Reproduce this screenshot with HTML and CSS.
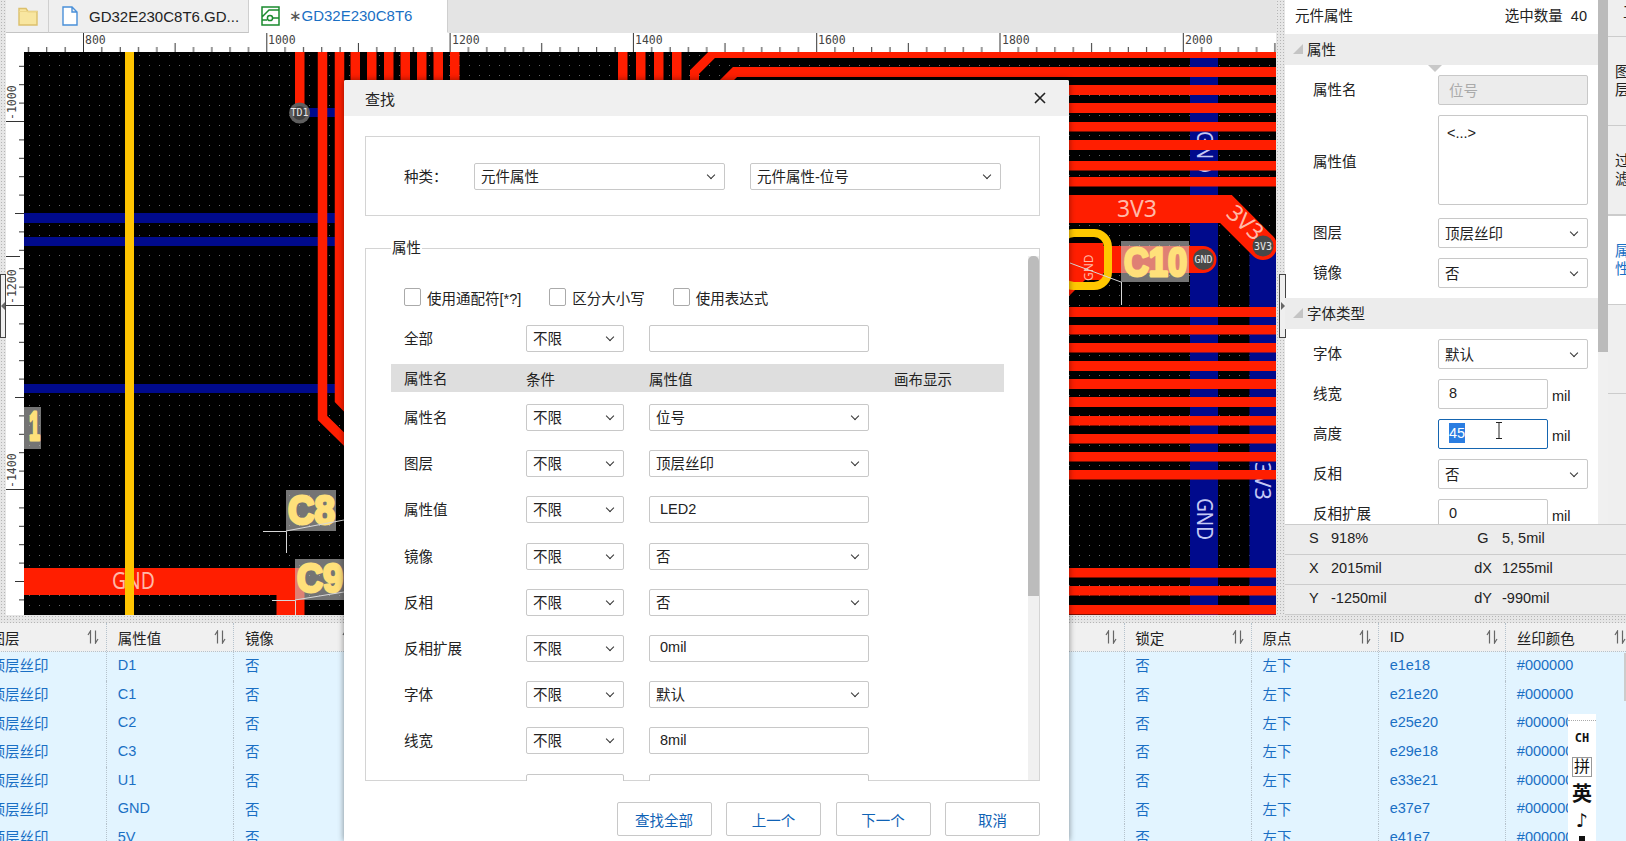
FILE: index.html
```html
<!DOCTYPE html>
<html lang="zh-cn">

<head>
	<meta charset="UTF-8">
	<title>查找</title>
	<link rel="stylesheet" href="styles.css">
</head>

<body>
	<svg class="defs" width="0" height="0">
		<symbol id="sort" viewBox="0 0 12 14">
			<path d="M3.5 13.5V1L1 5M8.5 .5V13L11 9" fill="none" stroke="#666" stroke-width="1.2" />
		</symbol>
	</svg>

	<div class="app">
		<div class="top">
			<div class="work">
				<div class="tabs">
					<div class="tab tab-folder">
						<svg width="20" height="20" viewBox="0 0 20 20">
							<path d="M1 2.5h7l2 3h9v13.5H1z" fill="#f8e6a0" stroke="#dcc06c" stroke-width="1.4" />
							<path d="M1 5.5h18" stroke="#ecd588" />
						</svg>
					</div>
					<div class="tab">
						<svg width="16" height="20" viewBox="0 0 16 20">
							<path d="M1 1h9l5 5v13H1zM10 1v5h5" fill="#fff" stroke="#4a90d9" stroke-width="1.4" />
						</svg>
						<span class="tab-name">GD32E230C8T6.GD...</span>
					</div>
					<div class="tab tab-active">
						<svg width="19" height="20" viewBox="0 0 19 20">
							<path d="M1 1h17v18H1zM1 11l7-7h10M1 14h5M12 12h6" fill="#fff" stroke="#1a8a2e" stroke-width="1.5" />
							<circle cx="9" cy="12" r="2.6" fill="#fff" stroke="#1a8a2e" stroke-width="1.5" />
						</svg>
						<span class="tab-name"><i>∗</i>GD32E230C8T6</span>
					</div>
				</div>

				<svg class="board" viewBox="6 33 1270 582" width="1270" height="582">
					<defs>
						<pattern id="dots" patternUnits="userSpaceOnUse" x="29" y="255" width="10" height="10">
							<rect width="1" height="1" fill="#666" />
						</pattern>
						<pattern id="ticks-x" patternUnits="userSpaceOnUse" x="83" y="33" width="183.3" height="19">
							<path d="M.5 0V19M18.8 14V19M37.2 14V19M55.5 14V19M73.8 14V19M92.1 10V19M110.5 14V19M128.8 14V19M147.1 14V19M165.5 14V19" stroke="#333" fill="none" />
						</pattern>
						<pattern id="ticks-y" patternUnits="userSpaceOnUse" x="6" y="121" width="18" height="184">
							<path d="M0 .5H18M13 18.9H18M13 37.3H18M13 55.7H18M13 74.1H18M9 92.5H18M13 110.9H18M13 129.3H18M13 147.7H18M13 166.1H18" stroke="#333" fill="none" />
						</pattern>
					</defs>

					<!-- canvas -->
					<rect x="24" y="52" width="1252" height="563" fill="#000" />
					<rect x="24" y="52" width="1252" height="563" fill="url(#dots)" />
					<g fill="#000a8c">
						<rect x="24" y="213" width="330" height="10" />
						<rect x="24" y="237" width="330" height="9" />
						<rect x="24" y="384" width="330" height="9" />
						<rect x="299" y="108" width="50" height="9" />
						<rect x="1190" y="58" width="28" height="557" />
						<rect x="1249.5" y="246" width="26.5" height="369" />
					</g>
					<g class="lane-text">
						<text transform="translate(1197,131) rotate(90)" textLength="42" lengthAdjust="spacingAndGlyphs">GND</text>
						<text transform="translate(1197,498) rotate(90)" textLength="42" lengthAdjust="spacingAndGlyphs">GND</text>
						<text transform="translate(1255,462) rotate(90)" textLength="38" lengthAdjust="spacingAndGlyphs">3V3</text>
					</g>

					<g fill="#ff1e00">
						<rect x="295" y="52" width="9.5" height="61" />
						<rect x="350.5" y="52" width="9.5" height="40" />
						<rect x="367" y="52" width="9.5" height="40" />
						<rect x="384" y="52" width="9.5" height="40" />
						<rect x="400.5" y="52" width="9.5" height="40" />
						<rect x="417" y="52" width="9.5" height="40" />
						<rect x="433.5" y="52" width="9.5" height="40" />
						<rect x="450" y="52" width="9.5" height="40" />
						<rect x="618" y="52" width="9.5" height="40" />
						<rect x="636" y="52" width="9.5" height="40" />
						<rect x="654" y="52" width="9.5" height="40" />
						<rect x="672" y="52" width="9.5" height="40" />
						<rect x="1060" y="85" width="216" height="10" />
						<rect x="1060" y="103" width="216" height="10" />
						<rect x="1060" y="122" width="216" height="9.5" />
						<rect x="1060" y="140" width="216" height="10" />
						<rect x="1060" y="161" width="216" height="9.5" />
						<rect x="1060" y="177" width="216" height="9.5" />
						<rect x="1060" y="307" width="216" height="10" />
						<rect x="1060" y="325" width="216" height="9.5" />
						<rect x="1060" y="343" width="216" height="9.5" />
						<rect x="1060" y="361" width="216" height="10" />
						<rect x="1060" y="379" width="216" height="10" />
						<rect x="1060" y="397" width="216" height="10" />
						<rect x="1060" y="416" width="216" height="9.5" />
						<rect x="1060" y="434" width="216" height="9.5" />
						<rect x="1060" y="452" width="216" height="9.5" />
						<rect x="1060" y="470" width="216" height="9.5" />
						<rect x="1060" y="568" width="216" height="9.5" />
						<rect x="1060" y="586" width="216" height="9.5" />
						<rect x="1060" y="605" width="216" height="9.5" />
						<rect x="24" y="568" width="280" height="27" />
						<rect x="276.5" y="568" width="28" height="47" />
						<polygon points="1060,243 1103,243 1103,280 1085,280 1062,303 1060,303" />
					</g>
					<g fill="none" stroke="#ff1e00">
						<path d="M322.5 52V418L350 445" stroke-width="9.5" />
						<path d="M339.5 52V400L350 411" stroke-width="9.5" />
						<path d="M694.5 95V72L713 53.5H1276" stroke-width="9" />
						<path d="M712 95L735 72H1276" stroke-width="10" />
						<path d="M1060 209H1226L1263 246" stroke-width="28" stroke-linecap="round" />
						<path d="M1100 259.5H1203" stroke-width="27" stroke-linecap="round" />
					</g>

					<rect x="125" y="52" width="9" height="563" fill="#ffc400" />
					<rect x="1060" y="233" width="48" height="53" rx="14" fill="none" stroke="#ffc800" stroke-width="8" />

					<g class="net-text">
						<text x="112" y="589" textLength="43" lengthAdjust="spacingAndGlyphs">GND</text>
						<text x="1117" y="217" textLength="40" lengthAdjust="spacingAndGlyphs">3V3</text>
						<text transform="translate(1225,215) rotate(42)">3V3</text>
						<text class="net-small" transform="translate(1093,281) rotate(-90)">GND</text>
					</g>
					<rect x="125" y="568" width="9" height="27" fill="#ffc400" />

					<!-- silk labels -->
					<g fill="#c8c8c8" fill-opacity=".58">
						<rect x="24" y="407" width="17" height="42" />
						<rect x="286" y="490" width="50" height="41" />
						<rect x="295" y="559" width="49" height="41" />
						<rect x="1121" y="241" width="68" height="41" />
					</g>
					<g class="silk">
						<text x="29" y="439.5" font-size="37" textLength="11" lengthAdjust="spacingAndGlyphs">1</text>
						<text x="288" y="523.5" textLength="47" lengthAdjust="spacingAndGlyphs">C8</text>
						<text x="297" y="591.5" font-size="38" textLength="46" lengthAdjust="spacingAndGlyphs">C9</text>
						<text x="1124" y="275.5" textLength="63" lengthAdjust="spacingAndGlyphs">C10</text>
					</g>
					<g stroke="#d8d8d8" fill="none">
						<path d="M263 531.5H286.5V553M286 531L344 520" />
						<path d="M272 600.5H295.5V615M295 600L344 592" />
						<path d="M1121.5 282V305M1070 263L1121 282" />
					</g>

					<!-- vias -->
					<g>
						<circle cx="299.6" cy="113" r="10.5" fill="#5f5f5f" />
						<circle cx="299.6" cy="113" r="7" fill="#3f3f3f" />
						<circle cx="1203.5" cy="259.5" r="10.5" fill="#484848" />
						<circle cx="1263" cy="246" r="10.5" fill="#484848" />
					</g>
					<g class="via-text">
						<text x="299.6" y="116">TD1</text>
						<text x="1203.5" y="263">GND</text>
						<text x="1263" y="250">3V3</text>
					</g>

					<!-- rulers -->
					<rect x="6" y="33" width="1270" height="19" fill="#fff" />
					<rect x="6" y="33" width="18" height="582" fill="#fff" />
					<rect x="24" y="33" width="1252" height="19" fill="url(#ticks-x)" />
					<rect x="6" y="52" width="18" height="563" fill="url(#ticks-y)" />
					<path d="M6 256.5H20" stroke="#333" />
					<g class="ruler-text">
						<text x="85" y="44">800</text>
						<text x="268" y="44">1000</text>
						<text x="452" y="44">1200</text>
						<text x="635" y="44">1400</text>
						<text x="818" y="44">1600</text>
						<text x="1002" y="44">1800</text>
						<text x="1185" y="44">2000</text>
						<text transform="translate(16,120) rotate(-90)">-1000</text>
						<text transform="translate(16,304) rotate(-90)">-1200</text>
						<text transform="translate(16,488) rotate(-90)">-1400</text>
					</g>
				</svg>
				<div class="handle handle-left"></div>
			</div>

			<div class="vsplit">
				<div class="handle handle-right"></div>
			</div>

			<div class="side">
				<div class="side-main">
					<div class="props">
						<div class="props-head"><span>元件属性</span><span>选中数量&nbsp; 40</span></div>
						<div class="section section-first"><span class="section-arrow"></span>属性</div>
						<div class="prop-list">
							<div class="prop"><label>属性名</label>
								<div class="box box-off">位号</div>
							</div>
							<div class="prop prop-tall"><label>属性值</label>
								<div class="box box-area">&lt;...&gt;</div>
							</div>
							<div class="prop"><label>图层</label>
								<div class="box sel">顶层丝印</div>
							</div>
							<div class="prop"><label>镜像</label>
								<div class="box sel">否</div>
							</div>
						</div>
						<div class="section"><span class="section-arrow"></span>字体类型</div>
						<div class="prop-list">
							<div class="prop"><label>字体</label>
								<div class="box sel">默认</div>
							</div>
							<div class="prop"><label>线宽</label>
								<div class="box box-num">8</div><span class="unit">mil</span>
							</div>
							<div class="prop"><label>高度</label>
								<div class="box box-num box-focus"><span class="selected">45</span></div><span class="unit">mil</span>
								<svg class="ibeam" width="8" height="17" viewBox="0 0 8 17">
									<path d="M1 .5h6M1 16.5h6M4 .5v16" fill="none" stroke="#222" />
								</svg>
							</div>
							<div class="prop"><label>反相</label>
								<div class="box sel">否</div>
							</div>
							<div class="prop"><label>反相扩展</label>
								<div class="box box-num">0</div><span class="unit">mil</span>
							</div>
						</div>
					</div>
					<div class="side-scroll"></div>
					<div class="strip">
						<div class="strip-item strip-first">工</div>
						<div class="strip-item">图<br>层</div>
						<div class="strip-item">过<br>滤</div>
						<div class="strip-item strip-active">属<br>性</div>
						<div class="strip-item"></div>
					</div>
				</div>
				<div class="status">
					<div class="status-row"><b>S</b><span>918%</span><b>G</b><span>5, 5mil</span></div>
					<div class="status-row"><b>X</b><span>2015mil</span><b>dX</b><span>1255mil</span></div>
					<div class="status-row"><b>Y</b><span>-1250mil</span><b>dY</b><span>-990mil</span></div>
				</div>
			</div>
		</div>

		<div class="hsplit"></div>

		<div class="list">
			<div class="list-row list-head">
				<div class="c">图层<svg class="sort"><use href="#sort" /></svg></div>
				<div class="c">属性值<svg class="sort"><use href="#sort" /></svg></div>
				<div class="c">镜像<svg class="sort"><use href="#sort" /></svg></div>
				<div class="c-hidden"><svg class="sort"><use href="#sort" /></svg></div>
				<div class="c">锁定<svg class="sort"><use href="#sort" /></svg></div>
				<div class="c">原点<svg class="sort"><use href="#sort" /></svg></div>
				<div class="c">ID<svg class="sort"><use href="#sort" /></svg></div>
				<div class="c">丝印颜色<svg class="sort"><use href="#sort" /></svg></div>
			</div>
			<div class="list-row">
				<div class="c">顶层丝印</div><div class="c">D1</div><div class="c">否</div><div class="c-hidden"></div>
				<div class="c">否</div><div class="c">左下</div><div class="c">e1e18</div><div class="c">#000000</div>
			</div>
			<div class="list-row">
				<div class="c">顶层丝印</div><div class="c">C1</div><div class="c">否</div><div class="c-hidden"></div>
				<div class="c">否</div><div class="c">左下</div><div class="c">e21e20</div><div class="c">#000000</div>
			</div>
			<div class="list-row">
				<div class="c">顶层丝印</div><div class="c">C2</div><div class="c">否</div><div class="c-hidden"></div>
				<div class="c">否</div><div class="c">左下</div><div class="c">e25e20</div><div class="c">#000000</div>
			</div>
			<div class="list-row">
				<div class="c">顶层丝印</div><div class="c">C3</div><div class="c">否</div><div class="c-hidden"></div>
				<div class="c">否</div><div class="c">左下</div><div class="c">e29e18</div><div class="c">#000000</div>
			</div>
			<div class="list-row">
				<div class="c">顶层丝印</div><div class="c">U1</div><div class="c">否</div><div class="c-hidden"></div>
				<div class="c">否</div><div class="c">左下</div><div class="c">e33e21</div><div class="c">#000000</div>
			</div>
			<div class="list-row">
				<div class="c">顶层丝印</div><div class="c">GND</div><div class="c">否</div><div class="c-hidden"></div>
				<div class="c">否</div><div class="c">左下</div><div class="c">e37e7</div><div class="c">#000000</div>
			</div>
			<div class="list-row">
				<div class="c">顶层丝印</div><div class="c">5V</div><div class="c">否</div><div class="c-hidden"></div>
				<div class="c">否</div><div class="c">左下</div><div class="c">e41e7</div><div class="c">#000000</div>
			</div>
		</div>
	</div>

	<div class="dialog">
		<div class="dialog-head">
			<span>查找</span>
			<svg width="12" height="12" viewBox="0 0 12 12">
				<path d="M1 1l10 10M11 1L1 11" stroke="#222" stroke-width="1.6" fill="none" />
			</svg>
		</div>
		<div class="dialog-body">
			<div class="kind-box">
				<span class="kind-label">种类：</span>
				<div class="box sel kind-sel">元件属性</div>
				<div class="box sel kind-sel">元件属性-位号</div>
			</div>

			<div class="attr-box">
				<div class="attr-legend">属性</div>
				<div class="attr-scroll"><div class="attr-thumb"></div></div>

				<div class="checks">
					<label class="check"><span class="check-mark"></span>使用通配符[*?]</label>
					<label class="check"><span class="check-mark"></span>区分大小写</label>
					<label class="check"><span class="check-mark"></span>使用表达式</label>
				</div>

				<div class="f-row f-all">
					<span class="f-label">全部</span>
					<div class="box sel f-cond">不限</div>
					<div class="box f-val"></div>
				</div>

				<div class="f-head">
					<span class="f-label">属性名</span>
					<span class="f-headcond">条件</span>
					<span class="f-headval">属性值</span>
					<span>画布显示</span>
				</div>

				<div class="f-rows">
					<div class="f-row">
						<span class="f-label">属性名</span>
						<div class="box sel f-cond">不限</div>
						<div class="box sel f-val">位号</div>
					</div>
					<div class="f-row">
						<span class="f-label">图层</span>
						<div class="box sel f-cond">不限</div>
						<div class="box sel f-val">顶层丝印</div>
					</div>
					<div class="f-row">
						<span class="f-label">属性值</span>
						<div class="box sel f-cond">不限</div>
						<div class="box f-val f-text">LED2</div>
					</div>
					<div class="f-row">
						<span class="f-label">镜像</span>
						<div class="box sel f-cond">不限</div>
						<div class="box sel f-val">否</div>
					</div>
					<div class="f-row">
						<span class="f-label">反相</span>
						<div class="box sel f-cond">不限</div>
						<div class="box sel f-val">否</div>
					</div>
					<div class="f-row">
						<span class="f-label">反相扩展</span>
						<div class="box sel f-cond">不限</div>
						<div class="box f-val f-text">0mil</div>
					</div>
					<div class="f-row">
						<span class="f-label">字体</span>
						<div class="box sel f-cond">不限</div>
						<div class="box sel f-val">默认</div>
					</div>
					<div class="f-row">
						<span class="f-label">线宽</span>
						<div class="box sel f-cond">不限</div>
						<div class="box f-val f-text">8mil</div>
					</div>
					<div class="f-row">
						<span class="f-label"></span>
						<div class="box f-cond"></div>
						<div class="box f-val"></div>
					</div>
				</div>
			</div>

			<div class="dialog-foot">
				<button>查找全部</button>
				<button>上一个</button>
				<button>下一个</button>
				<button>取消</button>
			</div>
		</div>
	</div>

	<div class="ime">
		<span class="ime-ch">CH</span>
		<span class="ime-py">拼</span>
		<span class="ime-en">英</span>
		<span class="ime-note">♪</span>
		<span class="ime-dot"></span>
	</div>
</body>

</html>
```

FILE: styles.css
```css
body {
	font-family: "Liberation Sans", "Noto Sans CJK SC", sans-serif;
	font-size: 14.5px;
	color: #222;
	margin: 0;
	padding: 0;
	width: 1626px;
	height: 841px;
	overflow: hidden;
	position: relative;
}

.defs {
	display: block;
}

.app {
	display: flex;
	flex-direction: column;
	height: 841px;
}

.top {
	display: flex;
	height: 615px;
}

.hsplit,
.vsplit,
.work {
	background-color: #e6e6e6;
	background-image: radial-gradient(#b5b5b5 .8px, transparent 1px);
	background-size: 3px 3px;
}

/* canvas column */
.work {
	width: 1270px;
	padding-left: 6px;
	position: relative;
	flex: none;
}

.tabs {
	display: flex;
	height: 33px;
	background-color: #e4e4e4;
}

.tab {
	display: flex;
	align-items: center;
	width: 199.5px;
	height: 33px;
	padding-left: 13px;
	box-sizing: border-box;
	background-color: #efefef;
	border-right: 1px solid #cfcfcf;
	border-bottom: 1px solid #c4c4c4;
	flex: none;
}

.tab-folder {
	width: 43px;
	padding-left: 12px;
}

.tab-name {
	margin-left: 11px;
	font-size: 15px;
	white-space: nowrap;
}

.tab-active {
	padding-left: 12px;
	background-color: #fff;
	border-bottom-color: #fff;
	color: #1a6fc4;
}

.tab-active .tab-name {
	margin-left: 9px;
}

.tab-name i {
	font-style: normal;
	color: #555;
}

.board {
	display: block;
}

.ruler-text text {
	font-family: "DejaVu Sans Mono", monospace;
	font-size: 11.5px;
	fill: #444;
}

.lane-text text {
	font-family: "Noto Sans", sans-serif;
	font-size: 22px;
	fill: #c5c9f5;
}

.net-text text {
	font-family: "Noto Sans", sans-serif;
	font-size: 23px;
	fill: #ffb9a8;
}

.net-text .net-small {
	font-size: 12px;
}

.silk text {
	font-family: "Liberation Sans", sans-serif;
	font-weight: bold;
	font-size: 40px;
	fill: #ffe07a;
	stroke: #ffe07a;
	stroke-width: 3px;
	stroke-linejoin: round;
}

.via-text text {
	font-family: "DejaVu Sans Mono", monospace;
	font-size: 10px;
	fill: #e8e8e8;
	text-anchor: middle;
}

.handle {
	position: absolute;
	top: 274px;
	width: 5px;
	height: 62px;
	background-color: #efefef;
	border: 1px solid #444;
	box-sizing: content-box;
}

.handle::after {
	content: "";
	position: absolute;
	top: 27px;
	border: 4px solid transparent;
}

.handle-left {
	left: 0;
	width: 4px;
}

.handle-left::after {
	left: -4px;
	border-right-color: #666;
}

.vsplit {
	width: 9px;
	flex: none;
	position: relative;
}

.handle-right {
	left: 3px;
}

.handle-right::after {
	left: 1px;
	border-left-color: #666;
}

/* right side */
.side {
	width: 341px;
	flex: none;
	display: flex;
	flex-direction: column;
	background-color: #fff;
}

.side-main {
	display: flex;
	height: 524px;
	overflow: hidden;
}

.props {
	width: 313px;
	flex: none;
	position: relative;
}

.props-head {
	display: flex;
	justify-content: space-between;
	align-items: center;
	height: 34px;
	padding: 0 11px 5px 10px;
	box-sizing: border-box;
}

.section {
	display: flex;
	align-items: center;
	height: 31px;
	padding: 0 0 2px 8px;
	box-sizing: border-box;
	background-color: #ececec;
	position: relative;
}

.section-arrow {
	width: 0;
	height: 0;
	margin-right: 4px;
	border-left: 10px solid transparent;
	border-bottom: 10px solid #c4c4c4;
}

.section-first::after {
	content: "";
	position: absolute;
	left: 143px;
	top: 31px;
	border: 7px solid transparent;
	border-top-color: #c8c8c8;
}

.prop-list {
	display: flex;
	flex-direction: column;
	gap: 10px;
	padding: 10px 0;
}

.prop {
	display: flex;
	align-items: center;
	padding-left: 28px;
	position: relative;
}

.prop label {
	width: 125px;
	margin-top: -3px;
	flex: none;
}

.prop-tall {
	margin-bottom: 3px;
}

.prop-tall label {
	margin-top: 0;
}

.box {
	display: flex;
	align-items: center;
	box-sizing: border-box;
	height: 30px;
	width: 150px;
	background-color: #fff;
	border: 1px solid #c8c8c8;
	border-radius: 2px;
	padding: 0 10px 2px;
	flex: none;
}

.box-off {
	background-color: #ececec;
	color: #aaa;
}

.box-area {
	height: 90px;
	align-items: flex-start;
	padding: 9px 8px;
}

.box-num {
	width: 110px;
}

.box-focus {
	border-color: #1565b0;
}

.selected {
	background-color: #2a7de1;
	color: #fff;
	line-height: 20px;
}

.unit {
	margin-left: 4px;
	padding-top: 4px;
}

.ibeam {
	position: absolute;
	left: 210px;
	top: 3px;
}

.sel {
	padding: 0 8px 2px 6px;
}

.sel::after {
	content: "";
	width: 5px;
	height: 5px;
	margin-left: auto;
	margin-right: 2px;
	margin-top: -1px;
	border-right: 1.4px solid #333;
	border-bottom: 1.4px solid #333;
	transform: rotate(45deg);
}

.side-scroll {
	width: 10px;
	flex: none;
	background: linear-gradient(#bbb 352px, #f0f0f0 352px);
}

.strip {
	flex: 1;
	display: flex;
	flex-direction: column;
	overflow: hidden;
	background-color: #efefef;
}

.strip-item {
	height: 89px;
	box-sizing: border-box;
	padding-left: 7px;
	border-bottom: 1px solid #ccc;
	display: flex;
	align-items: center;
	line-height: 18px;
	white-space: nowrap;
	flex: none;
}

.strip-first {
	height: 37px;
	padding: 3px 0 0 15px;
	align-items: flex-start;
}

.strip-active {
	height: 90px;
	background-color: #fff;
	color: #1a6fc4;
	border-top: 1px solid #ccc;
}

.status {
	flex: 1;
	background-color: #ececec;
	border-bottom: 1px solid #ccc;
}

.status-row {
	display: flex;
	align-items: center;
	height: 30px;
	box-sizing: border-box;
	padding: 0 0 4px 24px;
	border-top: 1px solid #ccc;
}

.status-row b {
	font-weight: normal;
	width: 22px;
	flex: none;
}

.status-row span {
	width: 140px;
	flex: none;
}

.status-row span + b {
	width: 24px;
	margin-right: 7px;
	text-align: center;
}

/* bottom list */
.hsplit {
	height: 8px;
	flex: none;
}

.list {
	flex: 1;
	overflow: hidden;
	background-color: #e2f4ff;
	color: #1a6fc4;
	position: relative;
}

.list::after {
	content: "";
	position: absolute;
	right: 0;
	top: 30px;
	width: 2px;
	height: 48px;
	background-color: #ccc;
}

.list-row {
	display: flex;
	height: 28.7px;
	margin-left: -20px;
	width: 1700px;
}

.list-head {
	height: 29px;
	background-color: #f0f0f0;
	color: #222;
	border-bottom: 1px dotted #b5c2cc;
	box-sizing: border-box;
}

.c,
.c-hidden {
	display: flex;
	align-items: center;
	justify-content: space-between;
	box-sizing: border-box;
	width: 127.2px;
	padding: 0 7px 3px 10.5px;
	border-right: 1px dotted #b5c2cc;
	flex: none;
	white-space: nowrap;
}

.list-head .c,
.list-head .c-hidden {
	padding-bottom: 0;
}

.c-hidden {
	width: 763.2px;
	justify-content: flex-end;
}

.sort {
	width: 12px;
	height: 14px;
}

/* find dialog */
.dialog {
	position: absolute;
	left: 344px;
	top: 80px;
	width: 725px;
	height: 761px;
	background-color: #fff;
	box-shadow: 0 0 6px rgba(0, 0, 0, .45);
	border-radius: 2px 2px 0 0;
	overflow: hidden;
}

.dialog-head {
	display: flex;
	justify-content: space-between;
	align-items: center;
	height: 36px;
	padding: 0 23px 0 21px;
	background-color: #f0f0f0;
	box-sizing: border-box;
	font-size: 15px;
}

.dialog-body {
	padding: 20px 29px 0 21px;
}

.kind-box {
	display: flex;
	align-items: center;
	height: 80px;
	box-sizing: border-box;
	padding-left: 38px;
	border: 1px solid #d4d4d4;
}

.kind-label {
	width: 70px;
	margin-top: -2px;
}

.box.kind-sel {
	width: 251px;
	height: 27px;
	margin-right: 25px;
}

.attr-box {
	height: 533px;
	margin-top: 32px;
	box-sizing: border-box;
	border: 1px solid #d4d4d4;
	position: relative;
	padding: 39px 0 0 38px;
	clip-path: inset(-14px 0 0 0);
}

.attr-legend {
	position: absolute;
	left: 25px;
	top: -10px;
	background-color: #fff;
	line-height: 18px;
	height: 18px;
	padding: 0 1px;
}

.attr-scroll {
	position: absolute;
	right: 0;
	top: 7px;
	bottom: 0;
	width: 11px;
	background-color: #f0f0f0;
}

.attr-thumb {
	height: 340px;
	background-color: #bcbcbc;
	border-radius: 5px 5px 0 0;
}

.checks {
	display: flex;
	height: 18px;
	gap: 28px;
}

.check {
	display: flex;
	align-items: center;
}

.check-mark {
	width: 15px;
	height: 16px;
	margin-right: 6px;
	border: 1px solid #aaa;
	border-radius: 2px;
	background-color: #fff;
}

.f-all {
	margin-top: 19px;
}

.f-row {
	display: flex;
	align-items: center;
}

.f-label {
	width: 122px;
	margin-top: -2px;
	flex: none;
}

.box.f-cond {
	width: 98px;
	height: 27px;
	margin-right: 25px;
}

.box.f-val {
	width: 220px;
	height: 27px;
}

.box.f-text {
	padding-left: 10px;
}

.f-head {
	display: flex;
	align-items: center;
	height: 28px;
	width: 613px;
	margin: 12px 0 12px -13px;
	padding-left: 13px;
	box-sizing: border-box;
	background-color: #dedede;
}

.f-headcond {
	width: 123px;
}

.f-headval {
	width: 245px;
}

.f-rows {
	display: flex;
	flex-direction: column;
	gap: 19.2px;
}

.dialog-foot {
	display: flex;
	justify-content: flex-end;
	gap: 14.5px;
	margin-top: 21px;
}

.dialog-foot button {
	width: 95px;
	height: 34px;
	font: inherit;
	color: #0f62b5;
	background-color: #fff;
	border: 1px solid #c8c8c8;
	border-radius: 2px;
}

/* input method bar */
.ime {
	position: absolute;
	left: 1568px;
	top: 714px;
	width: 28px;
	height: 127px;
	padding-top: 6px;
	background-color: #fff;
	display: flex;
	flex-direction: column;
	align-items: center;
	color: #111;
	overflow: hidden;
	box-sizing: border-box;
}

.ime::before {
	content: "";
	width: 100%;
	border-top: 1px dotted #aaa;
	margin-bottom: -1px;
}

.ime-ch {
	font-family: "DejaVu Sans Mono", monospace;
	font-size: 12px;
	font-weight: bold;
	line-height: 14px;
	margin-top: 11px;
}

.ime-py {
	font-size: 16px;
	line-height: 18px;
	padding: 0 1px;
	margin-top: 12px;
	border: 1px solid #999;
	flex: none;
}

.ime-en {
	font-size: 20px;
	font-weight: bold;
	line-height: 20px;
	margin-top: 7px;
	flex: none;
}

.ime-note {
	font-family: "DejaVu Sans", sans-serif;
	font-size: 19px;
	font-weight: bold;
	line-height: 20px;
	margin-top: 6px;
	flex: none;
}

.ime-dot {
	width: 6px;
	height: 6px;
	margin-top: 6px;
	background-color: #111;
	flex: none;
}
```
